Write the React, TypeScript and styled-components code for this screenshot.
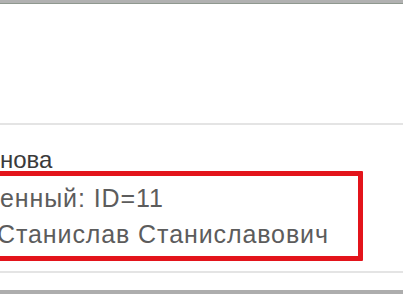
import styled, { createGlobalStyle } from "styled-components";

const GlobalStyle = createGlobalStyle`
  html, body {
    margin: 0;
    padding: 0;
    background: #ffffff;
    overflow: hidden;
  }
  body {
    font-family: "Liberation Sans", Arial, sans-serif;
  }
`;

const App = () => {
  return (
    <Page>
      <GlobalStyle />
      <TopBar />
      <Header />
      <Divider />
      <Card>
        <Line $tone="dark">нова</Line>
        <Highlight>
          <Line $tall>енный: ID=11</Line>
          <Line $tall $shift={-3}>
            Станислав Станиславович
          </Line>
        </Highlight>
      </Card>
      <Divider />
      <Gap />
      <BottomBar />
    </Page>
  );
};

export default App;

const Page = styled.div`
  width: 403px;
  height: 294px;
  overflow: hidden;
  display: flex;
  flex-direction: column;
  background: #ffffff;
`;

const TopBar = styled.div`
  height: 3px;
  flex-shrink: 0;
  background: #b1b1b1;
  border-bottom: 1px solid #8f988f;
`;

const Header = styled.div`
  height: 119px;
  flex-shrink: 0;
  background: #ffffff;
`;

const Divider = styled.div`
  height: 2px;
  flex-shrink: 0;
  background: #e4e4e4;
`;

const Card = styled.div`
  display: flex;
  flex-direction: column;
  padding-top: 23px;
  flex-shrink: 0;
`;

const Line = styled.div<{ $tone?: "dark"; $tall?: boolean; $shift?: number }>`
  font-family: "Liberation Sans", Arial, sans-serif;
  font-size: ${(p) => (p.$tall ? "25px" : "24px")};
  letter-spacing: ${(p) => (p.$tall ? "0.9px" : "0")};
  line-height: ${(p) => (p.$tall ? "36px" : "23px")};
  color: ${(p) => (p.$tone === "dark" ? "#3a3a3a" : "#5c5c5c")};
  white-space: nowrap;
  margin-left: ${(p) => p.$shift ?? 0}px;
`;

const Highlight = styled.div`
  margin-left: -10px;
  width: 373px;
  box-sizing: border-box;
  border: 5px solid #e3141b;
  border-radius: 1px;
  padding: 4px 0 4px 5px;
  margin-bottom: 10px;
`;

const Gap = styled.div`
  height: 17px;
  flex-shrink: 0;
`;

const BottomBar = styled.div`
  flex: 1;
  background: #adadad;
`;
